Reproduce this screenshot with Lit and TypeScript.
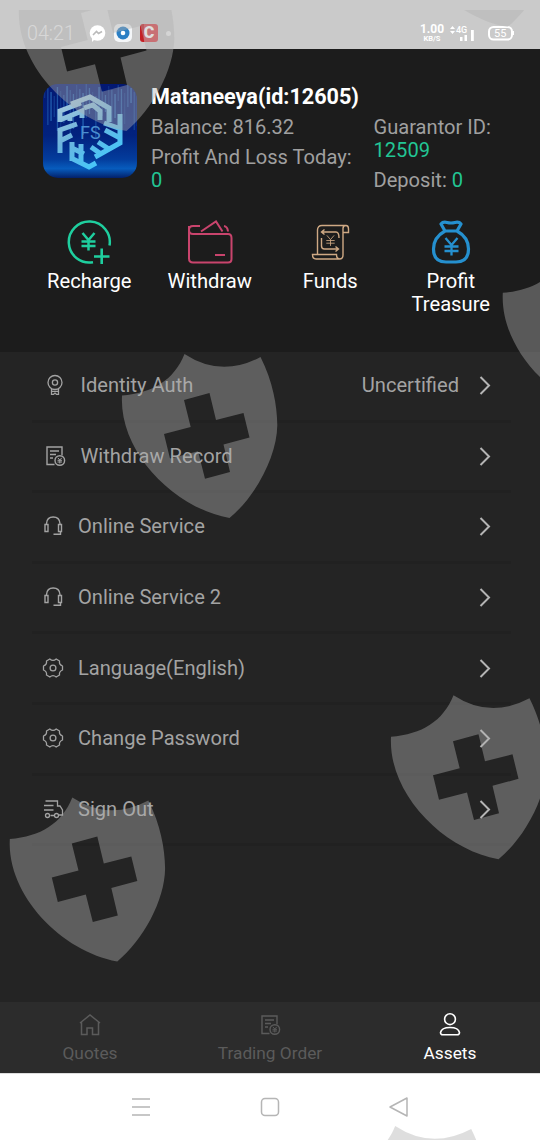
import { LitElement, html, css, svg } from "lit";
import { customElement, property } from "lit/decorators.js";

const yen = (x: number, y: number, s: number) => svg`
  <path transform="translate(${x} ${y}) scale(${s})" d="M-6 -8.5L0 -1.5L6 -8.5M0 -1.5V9M-7 0H7M-7 4.5H7"></path>`;

const icons: Record<string, unknown> = {
  recharge: svg`<svg width="46" height="46" viewBox="0 0 46 46" fill="none" stroke="#1fcf9f" stroke-width="2.5">
    <path d="M43.5 26.5A20.5 20.5 0 1 0 27 43.2"></path>${yen(22.5, 22.5, 1)}
    <path d="M28 37.5H43.5M35.7 29.5V45" stroke-width="2.6"></path></svg>`,
  withdraw: svg`<svg width="46" height="46" viewBox="0 0 46 46" fill="none" stroke="#c9446d" stroke-width="2">
    <path d="M2 7V39.5Q2 43.5 6 43.5H41Q44.500 43.5 44.500 40V19Q44.500 15 41 15H6Q2 15 2 11Q2 7 6 7H13"></path>
    <path d="M14 12.500L29 2.500L35.500 12.500M37 7Q40.500 7.500 41 12.500M28 36H38"></path></svg>`,
  funds: svg`<svg width="46" height="46" viewBox="0 0 46 46" fill="none" stroke="#cfa984" stroke-width="1.400">
    <path d="M10.500 35.500V11Q10.500 6.500 15 6.500H39Q41.500 6.500 41.500 10V13.500H36V9.500Q36 6.500 39 6.500M36 13V36Q36 40 32.500 40H9Q5.500 40 5.500 35.500H29.500Q29.500 40 33 40"></path>
    <path d="M15 13H29Q32 13 32 19M17.500 10.500L14.500 13L17.500 15.500M14.500 19V27Q14.500 30 17.500 30H31.500M28.500 27.500L31.500 30L28.500 32.500"></path>
    ${yen(23.5, 21.5, 0.6)}</svg>`,
  treasure: svg`<svg width="46" height="46" viewBox="0 0 46 46" fill="none" stroke="#2590cf" stroke-width="3.200" stroke-linejoin="round">
    <path d="M17 12L13 5Q15 2.500 19 3.500Q23 4.500 27 3.500Q31 2.500 33 5L29 12ZM17 12C8 17 5.500 24 5.500 30Q5.500 43 18 43H28Q40.500 43 40.500 30C40.500 24 38 17 29 12"></path>
    <g stroke-width="2.300">${yen(23.5, 27.5, 1)}</g></svg>`,
  badge: svg`<svg width="22" height="22" viewBox="0 0 22 22" fill="none" stroke="currentColor" stroke-width="1.300">
    <circle cx="11" cy="8.500" r="7"></circle><circle cx="11" cy="8.500" r="2.600"></circle>
    <path d="M7.500 15V20.300H9.500L11 19L12.500 20.300H14.500V15M7.500 17.300H14.500"></path></svg>`,
  record: svg`<svg width="22" height="22" viewBox="0 0 22 22" fill="none" stroke="currentColor" stroke-width="1.400">
    <path d="M10.500 19.500H3V2H18V10.500M6 6H15M6 9.500H12M6 13H9"></path><circle cx="15.800" cy="15.500" r="4.800"></circle>
    <path d="M13.800 12.800L15.800 15L17.800 12.800M15.800 15V18.500M13.500 15.300H18M13.500 17H18" stroke-width="1"></path></svg>`,
  headset: svg`<svg width="22" height="22" viewBox="0 0 22 22" fill="none" stroke="currentColor" stroke-width="1.400">
    <path d="M4.500 9.500V8.500Q5 2 11.200 2Q17.500 2 18 8.500V9.500M3 9.500H6V16.500H3ZM16.500 9.500H19.500V16.500H16.500ZM18.500 16.500V19.300H11.500"></path></svg>`,
  gear: svg`<svg width="22" height="22" viewBox="0 0 22 22" fill="none" stroke="currentColor" stroke-width="1.300" stroke-linejoin="round">
    <path d="M7.800 2Q11 4.800 14.200 2L17.500 4Q16.900 7.700 20.500 9V13Q16.900 14.300 17.500 18L14.200 20Q11 17.200 7.800 20L4.500 18Q5.100 14.300 1.500 13V9Q5.100 7.700 4.500 4Z"></path>
    <circle cx="11" cy="11" r="2.900"></circle></svg>`,
  exit: svg`<svg width="22" height="22" viewBox="0 0 22 22" fill="none" stroke="currentColor" stroke-width="1.300">
    <path d="M3.500 3H15.500V8H18L20.500 12V17H17M2 7.500H11.500M2 12H11.500M8.500 17.500H12.500"></path>
    <circle cx="5.500" cy="17.500" r="2"></circle><circle cx="14.500" cy="17.500" r="2"></circle></svg>`,
  home: svg`<svg width="24" height="24" viewBox="0 0 24 24" fill="none" stroke="currentColor" stroke-width="1.500">
    <path d="M2 10L12 2L22 10M3.500 9V21.500H9V15H14.500V21.500H20.500V9"></path></svg>`,
  person: svg`<svg width="24" height="24" viewBox="0 0 24 24" fill="none" stroke="currentColor" stroke-width="1.600">
    <circle cx="12" cy="6.200" r="5.400"></circle>
    <path d="M5 21.800Q2.500 21.800 2.500 19.500Q3.500 14.500 12 14.500Q20.500 14.500 21.500 19.500Q21.500 21.800 19 21.800Z"></path></svg>`,
};

@customElement("status-bar")
class StatusBar extends LitElement {
  static styles = css`
    :host { display: flex; height: 49px; background: #cacaca; color: #fff; box-sizing: border-box; padding: 17px 26px 0 27px; align-items: center; }
    .time { font-size: 19.700px; width: 62px; color: #f4f4f4; font-weight: 300; }
    .apps { display: flex; gap: 8px; align-items: center; flex: 1; }
    .c { width: 18px; height: 18px; border-radius: 3px; background: linear-gradient(90deg, #c41f25 22%, #d9444a 22%); font: 900 16px/18px Roboto, sans-serif; text-align: center; }
    .dot { width: 5px; height: 5px; border-radius: 50%; background: #eee; }
    .rate { display: flex; flex-direction: column; font-size: 12px; line-height: 12px; font-weight: 700; text-align: center; width: 26px; margin-right: 5px; }
    .unit { font-size: 7.500px; line-height: 8px; }
    svg { display: block; }
  `;
  render() {
    return html`<div class="time">04:21</div>
      <div class="apps">
        <svg width="17" height="17" viewBox="0 0 17 17"><circle cx="8.500" cy="8" r="7.800" fill="#fff"></circle><path d="M3 17V12H8Z" fill="#fff"></path><path d="M4 10L7.500 6.500L9.500 8.500L13 6.500" fill="none" stroke="#bbb" stroke-width="1.600"></path></svg>
        <svg width="18" height="18" viewBox="0 0 18 18"><rect width="18" height="18" rx="5" fill="#f4f6f8"></rect><circle cx="9" cy="9" r="6.500" fill="#2b7fc4"></circle><circle cx="9" cy="9" r="2.300" fill="#fff"></circle></svg>
        <div class="c">C</div><div class="dot"></div>
      </div>
      <div class="rate"><span>1.00</span><span class="unit">KB/S</span></div>
      <svg width="64" height="20" viewBox="0 0 64 20" fill="#fff">
        <path d="M0 6L2.500 3L5 6ZM0 8L2.500 11L5 8Z"></path>
        <text x="6" y="10" font-size="9" font-weight="500">4G</text>
        <path d="M10 14h2.500v4H10zM14.500 12h2.500v6h-2.500zM21 7h2.800v11H21z"></path>
        <rect x="39" y="4" width="23" height="12.500" rx="4.500" fill="none" stroke="#fff" stroke-width="2"></rect>
        <path d="M63 8h1.500v4H63z"></path><text x="44" y="14.200" font-size="11">55</text>
      </svg>`;
  }
}

@customElement("brand-logo")
class BrandLogo extends LitElement {
  static styles = css`:host { display: block; width: 94px; height: 94px; border-radius: 15px; overflow: hidden; } svg { display: block; }`;
  render() {
    const rain = Array.from({ length: 30 }, (_, i) => ({ x: 1 + i * 3.2, y: (i * 17) % 13, h: 14 + ((i * 23) % 31), o: 0.15 + ((i * 7) % 5) / 12 }));
    return html`<svg width="94" height="94" viewBox="0 0 94 94">
      <defs>
        <linearGradient id="bg" x1="0" y1="0" x2="0" y2="1"><stop offset="0" stop-color="#031873"></stop><stop offset=".55" stop-color="#02227e"></stop><stop offset=".8" stop-color="#033c9c"></stop><stop offset=".9" stop-color="#075cbd"></stop><stop offset="1" stop-color="#032069"></stop></linearGradient>
        <linearGradient id="ink" gradientUnits="userSpaceOnUse" x1="20" y1="15" x2="60" y2="80"><stop offset="0" stop-color="#a9c9dc"></stop><stop offset=".5" stop-color="#6cb4de"></stop><stop offset="1" stop-color="#45c8fa"></stop></linearGradient>
      </defs>
      <rect width="94" height="94" fill="url(#bg)"></rect>
      ${rain.map((r) => svg`<rect x=${r.x} y=${r.y} width="1.300" height=${r.h} fill="#45a5ec" opacity=${r.o}></rect>`)}
      <g fill="none" stroke="url(#ink)" stroke-width="5" stroke-linejoin="miter">
        <path d="M28 20L47 13L66 24V38M41 24L50 21L57 27V36"></path>
        <path d="M17 38V27L38 19M17 36L39 27V34M27 31V37"></path>
        <path d="M77 30V59L52 73M78 45L61 39M77 54L62 46M66 65L55 58M58 70L48 63"></path>
        <path d="M17 69V46L34 40M17 57L29 51M29 77V58M28 74L46 83L53 79M29 64L41 70M38 60V78"></path>
      </g>
      <text x="37" y="55" font-size="18" fill="#4b8ed0" font-family="Roboto, sans-serif">FS</text>
    </svg>`;
  }
}

@customElement("menu-row")
class MenuRow extends LitElement {
  @property() icon = "";
  @property() label = "";
  @property() value = "";
  static styles = css`
    :host { display: flex; align-items: center; box-sizing: border-box; height: 70.600px; margin: 0 29px 0 32px; padding: 0 20px 1px 10px; border-bottom: 3px solid #212121; color: #a3a3a3; font-size: 20.100px; }
    svg { display: block; }
    .icon { width: 22px; margin-right: 14px; }
    .wide { margin-left: 2px; margin-right: 14.500px; }
    .label { flex: 1; }
    .value { margin-right: 20px; }
  `;
  render() {
    const wide = this.icon === "badge" || this.icon === "record";
    return html`<div class="icon ${wide ? "wide" : ""}">${icons[this.icon]}</div>
      <div class="label">${this.label}</div><div class="value">${this.value}</div>
      <svg width="12" height="20" viewBox="0 0 12 20" fill="none" stroke="#b4b4b4" stroke-width="2"><path d="M1.500 2L10 10.500L1.500 19"></path></svg>`;
  }
}

@customElement("shield-pattern")
class ShieldPattern extends LitElement {
  static styles = css`:host { position: absolute; left: 0; top: 10px; width: 540px; height: 1130px; overflow: hidden; pointer-events: none; } svg { display: block; }`;
  render() {
    const spots = [[-103, -387], [278, -491], [380.8, -102.7], [0, 0], [269, 341.3], [-112.2, 443.4], [210.7, 772]];
    return html`<svg width="540" height="1130" viewBox="0 10 540 1130" fill="#b0b0b0" fill-opacity=".415" fill-rule="evenodd">
      ${spots.map(([x, y]) => svg`<path transform="translate(${x} ${y})" d="M184.500 354Q221 378 260.500 357C273 382 277 405 277.300 425C277 457 255 497 229.500 518C174 508 119 452 122 395.500C153 393 174 380 184.500 354ZM184 400L209.500 393L216 420L243.500 413L249.500 437.500L223.500 444.500L230 472L205 478.700L198 451.200L170 458.500L164 434L190.700 427Z"></path>`)}
    </svg>`;
  }
}

@customElement("app-root")
class AppRoot extends LitElement {
  static styles = css`
    :host { display: flex; flex-direction: column; position: relative; width: 540px; height: 1140px; overflow: hidden; background: #242424; font-family: Roboto, sans-serif; }
    svg { display: block; }
    .head { height: 303px; background: #1c1c1c; box-sizing: border-box; padding-top: 35px; }
    .profile { display: flex; padding-left: 43px; height: 135px; box-sizing: border-box; }
    .info { margin-left: 14px; color: #a0a0a0; font-size: 20.100px; line-height: 23px; }
    .name { color: #fff; font-size: 21.600px; font-weight: 700; line-height: 26px; }
    .cols { display: grid; grid-template-columns: 222.500px 130px; margin-top: 6px; }
    .col { display: flex; flex-direction: column; gap: 7px; }
    .green { color: #22c594; }
    .actions { display: grid; grid-template-columns: repeat(4, 120.500px); padding-left: 29px; }
    .action { display: flex; flex-direction: column; align-items: center; color: #fff; font-size: 20.200px; line-height: 23px; text-align: center; padding: 0 18px; }
    .action span { margin-top: 4.500px; }
    .menu { flex: 1; }
    .tabs { height: 71px; background: #2c2c2c; display: grid; grid-template-columns: repeat(3, 180px); }
    .tab { display: flex; flex-direction: column; align-items: center; color: #5b5b5b; font-size: 17.300px; line-height: 22px; padding-top: 11px; }
    .glyph { display: flex; height: 24px; align-items: center; margin-bottom: 5px; }
    .active { color: #fff; }
    .system { height: 67px; background: #fff; border-top: 1px solid #ddd; box-sizing: border-box; display: flex; justify-content: center; gap: 107px; padding-top: 22px; }
  `;
  render() {
    const actions = [["recharge", "Recharge"], ["withdraw", "Withdraw"], ["funds", "Funds"], ["treasure", "Profit Treasure"]];
    const rows = [["badge", "Identity Auth", "Uncertified"], ["record", "Withdraw Record"], ["headset", "Online Service"], ["headset", "Online Service 2"], ["gear", "Language(English)"], ["gear", "Change Password"], ["exit", "Sign Out"]];
    const tabs = [["home", "Quotes"], ["record", "Trading Order"], ["person", "Assets"]];
    return html`<status-bar></status-bar>
      <div class="head">
        <div class="profile"><brand-logo></brand-logo>
          <div class="info"><div class="name">Mataneeya(id:12605)</div>
            <div class="cols">
              <div class="col"><div>Balance: 816.32</div><div>Profit And Loss Today:<br /><span class="green">0</span></div></div>
              <div class="col"><div>Guarantor ID:<br /><span class="green">12509</span></div><div>Deposit: <span class="green">0</span></div></div>
            </div></div>
        </div>
        <div class="actions">${actions.map(([i, l]) => html`<div class="action">${icons[i]}<span>${l}</span></div>`)}</div>
      </div>
      <div class="menu">${rows.map(([i, l, v]) => html`<menu-row .icon=${i} .label=${l} .value=${v ?? ""}></menu-row>`)}</div>
      <div class="tabs">${tabs.map(([i, l], n) => html`<div class="tab ${n === 2 ? "active" : ""}"><div class="glyph">${icons[i]}</div><span>${l}</span></div>`)}</div>
      <div class="system">
        <svg width="22" height="22" viewBox="0 0 22 22" stroke="#b5b5b5" stroke-width="1.500"><path d="M2 3H20M2 11H20M2 19H20"></path></svg>
        <svg width="22" height="22" viewBox="0 0 22 22" fill="none" stroke="#b5b5b5" stroke-width="1.500"><rect x="2.500" y="2.500" width="17" height="17" rx="3.500"></rect></svg>
        <svg width="22" height="22" viewBox="0 0 22 22" fill="none" stroke="#b5b5b5" stroke-width="1.500" stroke-linejoin="round"><path d="M2 11L19 2V20Z"></path></svg>
      </div>
      <shield-pattern></shield-pattern>`;
  }
}
